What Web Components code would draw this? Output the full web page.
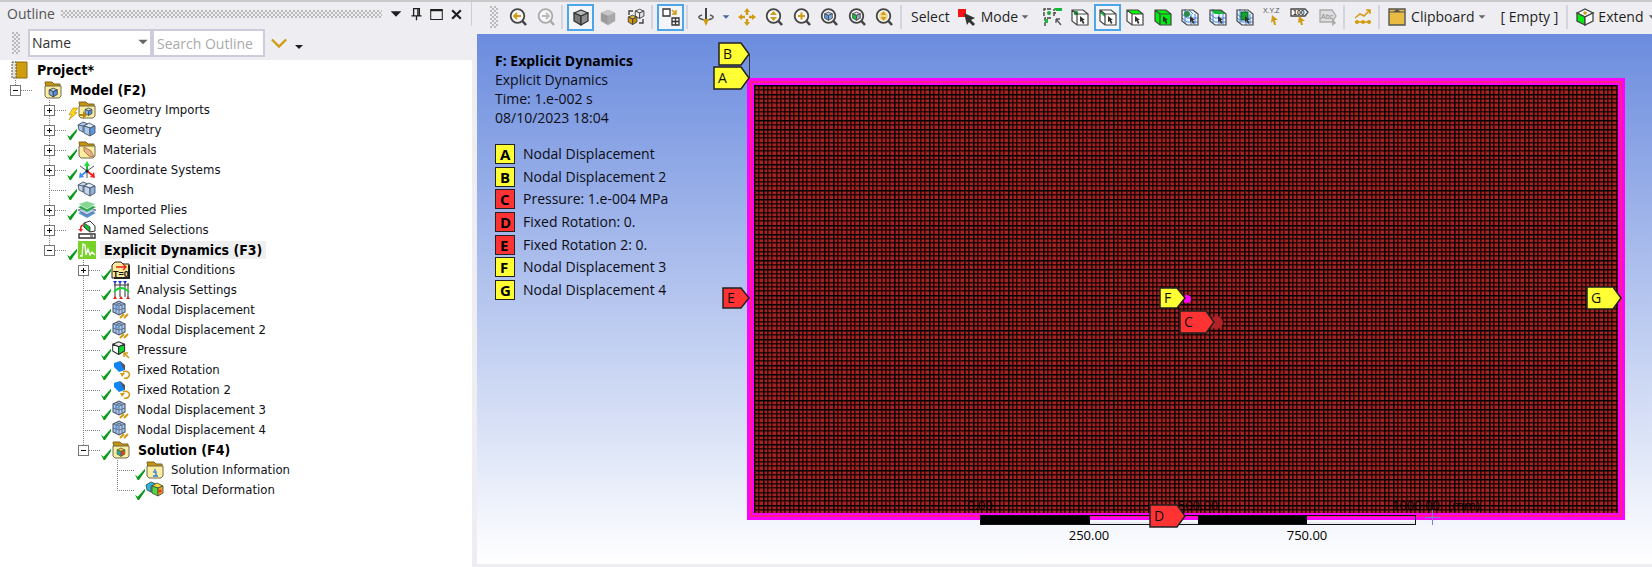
<!DOCTYPE html>
<html lang="en">
<head>
<meta charset="utf-8">
<title>Explicit Dynamics - Mechanical</title>
<style>
  html, body { margin: 0; min-height: 100vh; }
  body { background: #eeeef2; font: 14px/20px "Open Sans", "Noto Sans", sans-serif; color: #1e1e1e; overflow-x: hidden; }
</style>
</head>
<body>
<mech-app></mech-app>
<script>
/* ---------- icon library, every glyph drawn in an 18 x 18 box ---------- */
const G = '#444', Y = '#d19b12';
const lens = (inner, c = G) => `<circle cx="8.500" cy="8" r="6.800" fill="#f7f7f9" stroke="${c}" stroke-width="1.800"/><path d="M13 12.500L17 17" stroke="${c}" stroke-width="2.600"/>${inner}`;
const cube = (top, left, right, stroke = G, w = 1.2) => `<g stroke="${stroke}" stroke-width="${w}" stroke-linejoin="round"><path d="M2 5L9 2L16 5L9 8Z" fill="${top}"/><path d="M2 5L9 8V17L2 13Z" fill="${left}"/><path d="M16 5L9 8V17L16 13Z" fill="${right}"/></g>`;
const smallCube = (x, y, s, t, l, r, k = G, w = 1.5) => `<g transform="translate(${x} ${y}) scale(${s})">${cube(t, l, r, k, w)}</g>`;
const folder = inner => `<path d="M1 1H8L10 3H16V7H2Z" fill="#c8920a" stroke="#7a6424"/><path d="M1 5H17V15L15 17H3L1 15Z" fill="#fbeea0" stroke="#6f6a50"/>${inner}`;
const pick = `<path d="M9 8L14 12L12 12L13.500 15L12 16L10.500 13L9 14Z" fill="#333"/>`;
const box = (inner, fill = '#fff') => `<path d="M1 2H12L17 6V17H6L1 13Z" fill="${fill}"/>${inner}<path d="M1 2H12L17 6V17H6L1 13ZM1 2L6 6H17M6 6V17" fill="none" stroke="#444" stroke-width="1.200"/>`;
const meshed = inner => `<path d="M1 2H12L17 6V17H6L1 13Z" fill="#eef4ff"/><path d="M1 6L6 10H17M1 10L6 14H17M10 6V17M14 6V17M4 1V15M8 2L12 6" stroke="#4a86dc" fill="none"/>${inner}<path d="M1 2H12L17 6V17H6L1 13Z" fill="none" stroke="#444" stroke-width="1.200"/>${pick}`;
const nodal = `<path d="M1 3L7 0L13 3V11L7 14L1 11Z" fill="#a9c9f0" stroke="#4a5568" stroke-width="1.100"/><path d="M1 3L7 5L13 3M7 5V14M1 7L7 9L13 7M4 4V12M10 4V12M4 1.500L10 4M10 1.500L4 4" stroke="#4a5568" stroke-width=".7" fill="none"/><path d="M3 5L6 6V8L3 7Z" fill="#5aa0f0"/><path d="M8 17L12 13M12 17L16 13" stroke="${Y}" stroke-width="2"/>`;
const pair = (a, b) => `<g stroke="#4a5568" stroke-width=".9" stroke-linejoin="round"><path d="M0 4L5 1L10 3V9L5 11L1 9Z" fill="${a}"/><path d="M0 4L5 5V11M5 5L10 3" fill="none"/><path d="M6 5L11 2L17 5L12 7Z" fill="#dbe8f8"/><path d="M6 5L12 7V15L6 12Z" fill="${a}"/><path d="M17 5L12 7V15L17 12Z" fill="${b}"/></g>`;
const rot = `<path d="M2 2L8 0L13 5V9L7 11L2 6Z" fill="#1186f2"/><path d="M8 0L13 4V9L11 7Z" fill="#556"/><path d="M11 11A4 3.500 0 1 1 12 17" fill="none" stroke="${Y}" stroke-width="1.600"/><path d="M8 12H13L10 16Z" fill="${Y}"/>`;
const ICONS = {
  project: `<path d="M4 1H16V17H4Z" fill="#cf9d10" stroke="#8a6a12"/><path d="M1 1H5V17H1Z" fill="#e8e4d4" stroke="#555" stroke-dasharray="2 1"/>`,
  model: folder(smallCube(4, 6, .58, '#b8d4f4', '#7fb0ec', '#4d8ee0')),
  imports: folder(smallCube(6, 6, .5, '#b8d4f4', '#7fb0ec', '#4d8ee0') + `<path d="M1 13H5V10L9 14L5 18V15H1Z" fill="#b9860c"/>`),
  geometry: pair('#a9c8ef', '#5d97e0'),
  materials: folder(`<path d="M6 6L13 10L16 16L11 15L6 10Z" fill="#e6b48a" stroke="#b07a4a"/>`),
  coords: `<path d="M9 10V4" stroke="#12c33a" stroke-width="2"/><path d="M9 0L12 5H6Z" fill="#1ee03a"/><path d="M9 10L4 14" stroke="#3d8ff0" stroke-width="2"/><path d="M1 17L2 11L6 16Z" fill="#3d8ff0"/><path d="M9 10L14 14" stroke="#f02020" stroke-width="2"/><path d="M17 17L12 16L16 11Z" fill="#f02020"/><path d="M9 10L2 5M9 10L16 5M9 10V17" stroke="#555"/><circle cx="9" cy="10" r="1.600" fill="#222"/>`,
  mesh: pair('#c4d6ec', '#8fb2dd'),
  plies: `<path d="M0 12L9 9L18 12L9 17Z" fill="#5d92d6"/><path d="M0 9L9 6L18 9L9 14Z" fill="#b8d4f4" stroke="#456" stroke-width=".7"/><path d="M0 6L9 3L18 6L9 11Z" fill="#2fa64a"/><path d="M0 3L9 0L18 3L9 8Z" fill="#86d694" stroke="#fff" stroke-width=".6"/>`,
  named: `<path d="M6 2L12 0L17 5V10L12 11L6 6Z" fill="#fff" stroke="#333"/><path d="M6 2L12 6V11L6 6Z" fill="#12c33a" stroke="#333" stroke-width=".8"/><path d="M5 4Q2 5 3 9" stroke="#e22" stroke-width="1.600" fill="none"/><path d="M0 8H5L3 11Z" fill="#e22"/><path d="M1 13H17V17H1Z" fill="#fff" stroke="#333" stroke-width="1.400"/><path d="M12 15H15" stroke="#222"/>`,
  dynamics: `<path d="M0 0H18V18H0Z" fill="#78d22a"/><path d="M2 15H4L5 3L7 4L8 14L10 8L12 14L14 11L17 14" fill="none" stroke="#fff" stroke-width="1.300"/>`,
  initial: `<path d="M0 17V4L3 1H9L11 3H17V17Z" fill="#fbe9a0" stroke="#222"/><path d="M17 4V17H2" stroke="#222" stroke-width="2" fill="none"/><path d="M4 6H14M11 3L14 6L11 9" stroke="#e02010" stroke-width="1.300" fill="none"/><text x="1" y="16" font-family="Liberation Sans" font-weight="700" font-size="9" fill="#111">T=0</text>`,
  analysis: `<path d="M3 2V16M8 2V16M13 2V16M16 2V16M2 4H17" stroke="#333"/><path d="M2 11Q9 3 17 11" stroke="#12d030" stroke-width="1.800" fill="none"/><path d="M1 0H5L3 3ZM6 0H10L8 3ZM11 0H15L13 3Z" fill="#2030e0"/><path d="M1 18H5L3 15ZM7 18H11L9 15ZM14 18H18L16 15Z" fill="#e02020"/>`,
  nodal,
  pressure: smallCube(-1, -1, .85, '#eee', '#fff', '#10d838', '#333', 1.2) + `<path d="M17 17L13 13M12 16V12H16" stroke="${Y}" stroke-width="1.600" fill="none"/>`,
  rotation: rot,
  solution: folder(smallCube(4, 6, .55, '#ffd020', '#20c060', '#e04020', '#565') + `<circle cx="7" cy="12" r="1.500" fill="#2a9ae0" opacity=".7"/>`),
  solinfo: folder(`<path d="M9 8V10M7 11H10V15M7 15H12" stroke="#2c7fe0" stroke-width="1.400" fill="none"/>`),
  total: `<g stroke="#454" stroke-width=".9" stroke-linejoin="round"><path d="M0 4L5 1L10 3V9L5 11L1 9Z" fill="#2fb4e8"/><path d="M5 5L10 3V9L5 11Z" fill="#38d070"/><path d="M6 5L11 2L17 5L12 7Z" fill="#ffd830"/><path d="M6 5L12 7V15L6 12Z" fill="#58d838"/><path d="M17 5L12 7V15L17 12Z" fill="#f0a020"/></g><circle cx="14" cy="10" r="1.600" fill="#e83020"/>`,
  bolt: `<path d="M9 0H16L11 7H15L3 18L7 10H3Z" fill="#ffd820" stroke="#b98a00"/>`,
  check: `<path d="M0 10L4 13L15 1V5L6 18H4Z" fill="#0a9a1a"/>`,
  down: `<path d="M3 6H15L9 12Z" fill="currentColor"/>`,
  pin: `<path d="M5 1H13V11H5ZM2 11H16M9 11V17" fill="none" stroke="#1e1e1e" stroke-width="1.800"/><path d="M11 1V11" stroke="#1e1e1e" stroke-width="2"/>`,
  max: `<path d="M1 2H17V16H1Z" fill="none" stroke="#1e1e1e" stroke-width="1.400"/><path d="M1 3H17" stroke="#1e1e1e" stroke-width="3"/>`,
  close: `<path d="M3 3L15 15M15 3L3 15" stroke="#1e1e1e" stroke-width="3"/>`,
  chevron: `<path d="M1 5L9 13L17 5" fill="none" stroke="${Y}" stroke-width="2.600"/>`,
  zback: lens(`<path d="M12 8H6M8 5L5 8L8 11" stroke="${Y}" stroke-width="1.800" fill="none"/>`),
  zfwd: lens(`<path d="M5 8H11M9 5L12 8L9 11" stroke="#bbb" stroke-width="1.800" fill="none"/>`, '#aaa'),
  shaded: cube('#b8b8b8', '#777', '#8e8e8e', '#333', 1.3),
  plain: cube('#c8c8c8', '#9a9a9a', '#a8a8a8', '#aaa', .5),
  swap: smallCube(7, 0, .62, '#eee', '#eee', '#ddd') + smallCube(0, 6, .62, '#eab72a', '#d19b12', '#c08a0a') + `<path d="M2 7V3H6M16 11V15H12" stroke="#444" stroke-width="1.400" fill="none"/>`,
  viewports: `<path d="M1 1H8V8H1Z" fill="#fff" stroke="#333" stroke-width="1.300"/><path d="M10 2L14 6M14 2V6H10" stroke="${Y}" stroke-width="1.500" fill="none"/><path d="M10 10H17V17H10ZM13.500 10V17M10 13.500H17" fill="#fff" stroke="#333" stroke-width="1.300"/>`,
  orbit: `<path d="M5 7Q-1 9 4 11Q9 13 14 11Q19 9 13 7" stroke="#555" stroke-width="1.500" fill="none"/><path d="M9 0V12" stroke="#444" stroke-width="2"/><path d="M6 11H12L9 18Z" fill="${Y}"/>`,
  pan: `<path d="M9 0L12 4H6ZM9 18L12 14H6ZM0 9L4 6V12ZM18 9L14 6V12Z" fill="${Y}"/><path d="M9 4V7M9 11V14M4 9H7M11 9H14" stroke="${Y}" stroke-width="2.400"/>`,
  zoom: lens(`<path d="M8.500 3L12 7H5ZM8.500 13L12 9H5Z" fill="${Y}"/>`),
  zin: lens(`<path d="M5 8H12M8.500 4.500V11.500" stroke="${Y}" stroke-width="2"/>`),
  zfit: lens(smallCube(3.5, 3, .55, '#b8d4f4', '#5d97e0', '#7fb0ec')),
  zsel: lens(smallCube(3.5, 3, .55, '#dde', '#10c838', '#9ab')),
  zprev: lens(`<circle cx="8.500" cy="8" r="4.500" fill="#f2d890"/><path d="M8.500 3L11 7H6ZM8.500 13L11 9H6Z" fill="${Y}"/>`),
  mode: `<path d="M0 1H8V9H0Z" fill="#f21414"/><path d="M6 5L17 10L13 12L17 16L15 18L11 14L9 17Z" fill="#333"/>`,
  filter: `<path d="M0 8V1H7M10 8V1M10 5H12M1 18V10H8" stroke="#444" stroke-width="1.400" fill="none" stroke-dasharray="4 1"/><path d="M10 0H18V3H12ZM1 11H4V15H1Z" fill="#18b838"/><circle cx="5" cy="5" r="2" fill="#18a838"/><path d="M12 11L17 17M12 11V15M12 11H16" stroke="#555" stroke-width="1.300"/>`,
  vertex: box(`<circle cx="5" cy="5" r="2.300" fill="#18a838"/>`) + pick,
  edge: box(`<path d="M1 2L6 6V9L1 5Z" fill="#18b838"/>`) + pick,
  face: box(`<path d="M1 2H12L17 6H6Z" fill="#0f0"/>`) + pick,
  body: box('', '#00ee10') + pick,
  node: meshed(`<circle cx="6" cy="6" r="3" fill="#2a8a48"/>`),
  eface: meshed(`<path d="M1 2H12L16 6H6Z" fill="#18b838"/>`),
  element: meshed(`<path d="M5 4H12V12H5Z" fill="#16a030" stroke="#063"/>`),
  xyz: `<text x="-1" y="5" font-family="Liberation Sans" font-size="7" fill="#555">X.Y.Z</text><path d="M8 7L14 12L11 12L12 17L10 17L9 13L7 15Z" fill="${Y}"/>`,
  probe: `<path d="M0 1H14L17 4L14 8H0Z" fill="#fff" stroke="#444" stroke-width="1.300"/><text x="2" y="7" font-family="Liberation Sans" font-weight="700" font-size="7" fill="#333">100</text><path d="M8 8L14 13L11 13L12 17L10 17L9 14L7 15Z" fill="${Y}"/>`,
  abc: `<path d="M1 2H13L17 8L13 14H1Z" fill="#ddd" stroke="#aaa" stroke-width="1.300"/><text x="2" y="11" font-family="Liberation Sans" font-size="7" fill="#888">Abc</text><path d="M13 10V18L17 15Z" fill="#aaa"/>`,
  chart: `<path d="M1 10L6 6L10 8L16 2M12 2H16V6M1 14H17" stroke="${Y}" stroke-width="1.500" fill="none"/><circle cx="3" cy="14" r="2" fill="${Y}"/><circle cx="9" cy="14" r="2" fill="${Y}"/><circle cx="15" cy="14" r="2" fill="${Y}"/>`,
  clipboard: `<path d="M1 1H17V17H1Z" fill="#e8bb42" stroke="#555" stroke-width="1.400"/><path d="M1 4H17" stroke="#555"/><path d="M5 4L9 1L13 4Z" fill="#555"/>`,
  extend: `<path d="M1 5L9 1L17 5L9 9Z" fill="#fff" stroke="#444" stroke-width="1.300"/><path d="M1 5L9 9V17L1 13Z" fill="#0e1" stroke="#444" stroke-width="1.300"/><path d="M17 5L9 9V17L17 13Z" fill="#fff" stroke="#444" stroke-width="1.300"/><circle cx="9" cy="5" r="1.800" fill="${Y}"/>`
};

class UiIcon extends HTMLElement {
  connectedCallback() {
    if (this.shadowRoot) return;
    this.attachShadow({ mode: 'open' }).innerHTML = `
      <style>:host{display:block;flex:none;width:18px;height:18px} svg{display:block;width:100%;height:100%;overflow:visible}</style>
      <svg viewBox="0 0 18 18" aria-hidden="true">${ICONS[this.getAttribute('name')] || ''}</svg>`;
  }
}
customElements.define('ui-icon', UiIcon);

/* ---------- outline tree ---------- */
class TreeNode extends HTMLElement {
  connectedCallback() {
    if (this.shadowRoot) return;
    const a = n => this.getAttribute(n);
    const exp = a('expander');
    this.setAttribute('role', 'treeitem');
    this.attachShadow({ mode: 'open' }).innerHTML = `
      <style>
        :host{display:block;
          background:repeating-linear-gradient(#808080 0 1px,transparent 1px 2px) 15px 0/1px 100% no-repeat}
        :host(:last-child){background-size:1px 10px}
        :host([root]){background:none}
        .row{display:flex;align-items:center;height:20px;white-space:nowrap}
        .branch{flex:none;width:33px;height:20px;display:flex;align-items:center;box-sizing:border-box;padding-left:10px;
          background:repeating-linear-gradient(90deg,#808080 0 1px,transparent 1px 2px) 15px 10px/18px 1px no-repeat}
        :host([root]) .branch{display:none}
        .exp{width:11px;height:11px;padding:0;border:1px solid #777;background:
          linear-gradient(#111,#111) 2px 4px/5px 1px no-repeat,#fff}
        .exp.plus{background:linear-gradient(#111,#111) 2px 4px/5px 1px no-repeat,
          linear-gradient(#111,#111) 4px 2px/1px 5px no-repeat,#fff}
        .state{flex:none;width:11px;display:flex;align-items:end;height:20px}
        .state ui-icon{width:12px;height:12px}
        .label{margin-left:4px;padding:0 3px;line-height:18px;color:#101018}
        .label.bold{font-weight:700;font-size:14px;color:#000;padding:0 4px}
        .label.selected{background:#efefef}
        .kids{margin-left:34px}
        :host([root]) .kids{margin-left:0}
      </style>
      <div class="row">
        <span class="branch">${exp ? `<button class="exp ${exp}" aria-label="${exp === 'plus' ? 'Expand' : 'Collapse'}"></button>` : ''}</span>
        <span class="state">${a('state') ? `<ui-icon name="${a('state')}"></ui-icon>` : ''}</span>
        <ui-icon name="${a('icon')}"></ui-icon>
        <span class="label ${a('look') || ''}">${a('label')}</span>
      </div>
      <div class="kids" role="group"><slot></slot></div>`;
  }
}
customElements.define('tree-node', TreeNode);

class OutlinePanel extends HTMLElement {
  connectedCallback() {
    if (this.shadowRoot) return;
    const n = (label, icon, o = '', kids = '') => `<tree-node label="${label}" icon="${icon}" ${o}>${kids}</tree-node>`;
    const ok = 'state="check"', plus = 'expander="plus"', minus = 'expander="minus"';
    this.attachShadow({ mode: 'open' }).innerHTML = `
      <style>
        :host{display:flex;flex-direction:column;background:#eeeef2}
        header{display:flex;align-items:center;height:26px;border-top:2px solid #c9c9c9;box-sizing:border-box;
          padding:0 5px 0 7px;border-right:1px solid #ccccd8;color:#555}
        h2{margin:0;font-size:14px;font-weight:400;line-height:20px}
        .dots{flex:1;height:8px;margin:0 4px 0 6px;background:
          radial-gradient(circle at 1px 1px,#bbb 1px,transparent 1px) 0 0/4px 4px,
          radial-gradient(circle at 1px 1px,#bbb 1px,transparent 1px) 2px 2px/4px 4px}
        button{border:0;padding:0;background:none;color:#1e1e1e;display:grid;place-items:center;width:20px;height:20px}
        header ui-icon{width:13px;height:13px}
        header button.tri ui-icon{width:16px;height:16px}
        form{display:flex;align-items:center;height:34px;padding-left:12px;margin:0}
        .grip{width:8px;height:22px;margin-right:8px;background:
          radial-gradient(circle at 1px 1px,#bbb 1px,transparent 1px) 0 0/4px 4px,
          radial-gradient(circle at 1px 1px,#bbb 1px,transparent 1px) 2px 2px/4px 4px}
        .pick{position:relative;display:block}
        .pick ui-icon{position:absolute;right:2px;top:6px;width:14px;height:14px;color:#666;pointer-events:none}
        select,input{box-sizing:border-box;height:28px;border:2px solid #ccccdc;background:#fff;border-radius:0;
          font:inherit;padding:0 2px;appearance:none;margin:0;display:block;color:#333}
        select{width:124px} input{width:113px;padding:0 3px} input::placeholder{color:#aaa;opacity:1}
        form button{margin-left:4px}
        form button ui-icon{width:16px;height:16px}
        form .more{margin-left:0;align-items:end} .more ui-icon{width:12px;height:12px}
        .tree{flex:1;background:#fff;font:13px/18px "DejaVu Sans Condensed","Open Sans",sans-serif}
      </style>
      <header><h2>Outline</h2><span class="dots"></span>
        <button class="tri" aria-label="Options"><ui-icon name="down"></ui-icon></button>
        <button aria-label="Pin"><ui-icon name="pin"></ui-icon></button>
        <button aria-label="Maximise"><ui-icon name="max"></ui-icon></button>
        <button aria-label="Close"><ui-icon name="close"></ui-icon></button>
      </header>
      <form onsubmit="return false"><span class="grip"></span>
        <label class="pick"><select aria-label="Filter by"><option>Name</option></select><ui-icon name="down"></ui-icon></label>
        <input type="text" aria-label="Search Outline" placeholder="Search Outline">
        <button type="button" aria-label="Next"><ui-icon name="chevron"></ui-icon></button>
        <button type="button" class="more" aria-label="More"><ui-icon name="down"></ui-icon></button>
      </form>
      <div class="tree" role="tree">${
        n('Project*', 'project', 'root look="bold"',
          n('Model (F2)', 'model', `${minus} look="bold"`,
            n('Geometry Imports', 'imports', `${plus} state="bolt"`) +
            n('Geometry', 'geometry', `${plus} ${ok}`) +
            n('Materials', 'materials', `${plus} ${ok}`) +
            n('Coordinate Systems', 'coords', `${plus} ${ok}`) +
            n('Mesh', 'mesh', ok) +
            n('Imported Plies', 'plies', `${plus} ${ok}`) +
            n('Named Selections', 'named', plus) +
            n('Explicit Dynamics (F3)', 'dynamics', `${minus} ${ok} look="bold selected"`,
              n('Initial Conditions', 'initial', `${plus} ${ok}`) +
              n('Analysis Settings', 'analysis', ok) +
              n('Nodal Displacement', 'nodal', ok) +
              n('Nodal Displacement 2', 'nodal', ok) +
              n('Pressure', 'pressure', ok) +
              n('Fixed Rotation', 'rotation', ok) +
              n('Fixed Rotation 2', 'rotation', ok) +
              n('Nodal Displacement 3', 'nodal', ok) +
              n('Nodal Displacement 4', 'nodal', ok) +
              n('Solution (F4)', 'solution', `${minus} ${ok} look="bold"`,
                n('Solution Information', 'solinfo', ok) +
                n('Total Deformation', 'total', ok)))))
      }</div>`;
  }
}
customElements.define('outline-panel', OutlinePanel);

/* ---------- graphics toolbar ---------- */
class GraphicsToolbar extends HTMLElement {
  connectedCallback() {
    if (this.shadowRoot) return;
    const b = (name, label, on) => `<button class="tool${on ? ' on' : ''}" aria-label="${label}"><ui-icon name="${name}"></ui-icon></button>`;
    const sep = '<span class="sep"></span>';
    this.attachShadow({ mode: 'open' }).innerHTML = `
      <style>
        :host{display:flex;align-items:center;height:34px;box-sizing:border-box;border-top:2px solid #c9c9c9;
          background:#eeeef2;padding:0 0 2px 18px;overflow:hidden;white-space:nowrap}
        button{flex:none;border:0;padding:0;background:none;font:inherit;color:#1e1e1e;display:flex;align-items:center}
        .tool{width:27px;height:27px;justify-content:center;box-sizing:border-box}
        .tool.on{border:2px solid #4ea6ea;background:#f3f5f9}
        .grip{flex:none;width:8px;height:22px;margin-right:6px;background:
          radial-gradient(circle at 1px 1px,#bbb 1px,transparent 1px) 0 0/4px 4px,
          radial-gradient(circle at 1px 1px,#bbb 1px,transparent 1px) 2px 2px/4px 4px}
        .group{display:flex;flex:none;justify-content:space-between}
        .two{width:55px} .three{width:82px} .six{width:165px} .eleven{width:302px}
        .sep{flex:none;width:2px;height:24px;margin:0 4px 0 2px;background:#d4d4de}
        .drop{width:14px;justify-content:center}
        .drop ui-icon,.tri{width:10px;height:10px;color:#666}
        .drop ui-icon{color:#47699a}
        .text{margin-left:5px}
        .mode{margin:0 9px 0 8px} .mode ui-icon:first-child,.clip ui-icon:first-child{margin-right:5px}
        .tri{margin-left:2px}
        .clip{margin-left:4px} .empty{margin:0 6px 0 14px}
        .extend{margin-left:4px;gap:4px} .extend .tri{margin-left:0}
      </style>
      <span class="grip"></span>
      <span class="group two">${b('zback', 'Previous view')}${b('zfwd', 'Next view')}</span>${sep}
      <span class="group three">${b('shaded', 'Shaded exterior and edges', 1)}${b('plain', 'Shaded exterior')}${b('swap', 'Wireframe')}</span>${sep}
      ${b('viewports', 'Manage views', 1)}${sep}
      ${b('orbit', 'Rotate')}<button class="drop" aria-label="Rotate options"><ui-icon name="down"></ui-icon></button>
      <span class="group six">${b('pan', 'Pan')}${b('zoom', 'Zoom')}${b('zin', 'Box zoom')}${b('zfit', 'Zoom to fit')}${b('zsel', 'Zoom to selection')}${b('zprev', 'Magnifier')}</span>${sep}
      <span class="text">Select</span>
      <button class="mode"><ui-icon name="mode"></ui-icon>Mode<ui-icon class="tri" name="down"></ui-icon></button>
      <span class="group eleven">${b('filter', 'Smart select')}${b('vertex', 'Vertex')}${b('edge', 'Edge', 1)}${b('face', 'Face')}${b('body', 'Body')}${b('node', 'Node')}${b('eface', 'Element face')}${b('element', 'Element')}${b('xyz', 'Coordinates')}${b('probe', 'Probe')}${b('abc', 'Label')}</span>${sep}
      ${b('chart', 'Chart')}${sep}
      <button class="clip"><ui-icon name="clipboard"></ui-icon>Clipboard<ui-icon class="tri" name="down"></ui-icon></button>
      <button class="empty">[ Empty ]</button>${sep}
      <button class="extend"><ui-icon name="extend"></ui-icon>Extend<ui-icon class="tri" name="down"></ui-icon></button>`;
  }
}
customElements.define('graphics-toolbar', GraphicsToolbar);

/* ---------- annotation flag; its tip sits on the host's left/top point ---------- */
class PointFlag extends HTMLElement {
  connectedCallback() {
    if (this.shadowRoot) return;
    const w = +this.getAttribute('width'), h = w < 30 ? 22 : 24, t = this.getAttribute('tag');
    const c = 'CDE'.includes(t) ? '#ff3333' : '#ffff33';
    this.attachShadow({ mode: 'open' }).innerHTML = `
      <style>:host{position:absolute;display:block;width:${w}px;height:${h}px;transform:translate(-100%,-50%)} svg{display:block}
        text{font:14px "Open Sans",sans-serif;fill:#111}</style>
      <svg width="${w}" height="${h}"><path d="M1 1H${w - 9}L${w - 1} ${h / 2}L${w - 9} ${h - 1}H1Z" fill="${c}" stroke="#222" stroke-width="1.500"/>
      <text x="5" y="${h / 2 + 5}">${t}</text></svg>`;
  }
}
customElements.define('point-flag', PointFlag);

class ScaleRuler extends HTMLElement {
  connectedCallback() {
    if (this.shadowRoot) return;
    this.attachShadow({ mode: 'open' }).innerHTML = `
      <style>
        :host{display:block;font-size:13px;line-height:18px;color:#000}
        .bar{display:grid;grid-template-columns:repeat(4,1fr);height:10px;box-sizing:border-box;border:1px solid #111}
        .bar i:nth-child(odd){background:#000}
        .bar i:nth-child(even){border-bottom:2px solid #e6eaf0;align-self:end}
        span{position:absolute;transform:translateX(-50%);white-space:nowrap}
        .up{bottom:11px} .down{top:11px}
        .q1{left:25%} .q2{left:50%} .q3{left:75%} .q0{left:0} .q4{left:100%}
        .unit{left:calc(100% + 48px)}
      </style>
      <div class="bar"><i></i><i></i><i></i><i></i></div>
      <span class="up q0">0.00</span><span class="up q2">500.00</span><span class="up q4">1000.00</span><span class="up unit">(mm)</span>
      <span class="down q1">250.00</span><span class="down q3">750.00</span>`;
  }
}
customElements.define('scale-ruler', ScaleRuler);

class MeshModel extends HTMLElement {
  connectedCallback() {
    if (this.shadowRoot) return;
    const at = [0, 4, 9, 13, 17, 22, 26, 30];
    const lines = at.map(p => {
      const strong = p === 0 || p === 9;
      return `<path d="M${p} 0h1v35h-1zM0 ${p}h35v1H0z" fill="#000" opacity="${strong ? 1 : .72}"/>
              <path d="M${p + 1} 0h1v35h-1zM0 ${p + 1}h35v1H0z" fill="#000" opacity="${strong ? .5 : .4}"/>`;
    }).join('');
    this.attachShadow({ mode: 'open' }).innerHTML = `
      <style>
        :host{display:block;position:relative}
        .plate{position:absolute;inset:0;box-sizing:border-box;border:3px solid #f0f;background:#ff2080;padding:2px}
        .inner{height:100%;box-sizing:border-box;border:2px solid #f0f;background:#a82222}
        svg.mesh{display:block;width:100%;height:100%}
        .stem{position:absolute;left:2px;top:-24px;width:1px;height:24px;background:#333}
        .dot{position:absolute;left:calc(50% - 3px);top:calc(50% - 4px);width:8px;height:8px;border-radius:4px;background:#f0f}
        .head{position:absolute;left:calc(50% + 24px);top:calc(50% + 17px);width:13px;height:13px;border-radius:7px;background:#b02226}
        .cross{position:absolute;left:678px;bottom:-5px;width:15px;height:15px;background:
          linear-gradient(#7a78e8,#7a78e8) 7px 0/1px 15px no-repeat,linear-gradient(#7a78e8,#7a78e8) 0 7px/15px 1px no-repeat}
        scale-ruler{position:absolute;left:233px;width:436px;bottom:-5px}
        .a{left:3px;top:0} .b{left:3px;top:-24px} .e{left:3px;top:calc(50% - 1px)}
        .f{left:50%;top:calc(50% - 1px)} .c{left:calc(50% + 29px);top:calc(50% + 23px)}
        .d{left:50%;top:calc(100% - 4px)} .g{left:calc(100% - 3px);top:calc(50% - 1px)}
      </style>
      <div class="plate"><div class="inner"><svg class="mesh" aria-hidden="true">
        <defs><pattern id="cells" width="35" height="35" patternUnits="userSpaceOnUse">${lines}</pattern></defs>
        <rect width="100%" height="100%" fill="url(#cells)"/></svg></div></div>
      <span class="stem"></span><span class="dot"></span><span class="head"></span>
      <scale-ruler></scale-ruler><span class="cross"></span>
      <point-flag class="b" tag="B" width="32"></point-flag>
      <point-flag class="a" tag="A" width="37"></point-flag>
      <point-flag class="e" tag="E" width="28"></point-flag>
      <point-flag class="f" tag="F" width="27"></point-flag>
      <point-flag class="c" tag="C" width="36"></point-flag>
      <point-flag class="d" tag="D" width="37"></point-flag>
      <point-flag class="g" tag="G" width="36"></point-flag>`;
  }
}
customElements.define('mesh-model', MeshModel);

class GraphicsView extends HTMLElement {
  connectedCallback() {
    if (this.shadowRoot) return;
    const items = [['A', 'Nodal Displacement'], ['B', 'Nodal Displacement 2'], ['C', 'Pressure: 1.e-004 MPa'], ['D', 'Fixed Rotation: 0.'],
      ['E', 'Fixed Rotation 2: 0.'], ['F', 'Nodal Displacement 3'], ['G', 'Nodal Displacement 4']];
    this.attachShadow({ mode: 'open' }).innerHTML = `
      <style>
        :host{display:grid;grid-template-columns:270px 1fr;padding-right:27px;background:linear-gradient(#6b8cde,#fff);color:#0c0c14}
        .info{padding:17px 0 0 18px;line-height:19px;white-space:nowrap}
        h1{font-size:14px;line-height:19px;font-weight:700;margin:0;color:#000} p{margin:0}
        ul{list-style:none;margin:17px 0 0;padding:0;height:156px;display:flex;flex-direction:column;justify-content:space-between}
        li{display:flex;gap:8px;align-items:center;line-height:20px}
        b{width:20px;height:20px;box-sizing:border-box;border:1px solid #222;line-height:18px;padding-left:4px;font-size:15px;color:#000}
        .y{background:#ffff33} .r{background:#ff3333}
        mesh-model{margin:44px 0}
      </style>
      <section class="info"><h1>F: Explicit Dynamics</h1><p>Explicit Dynamics</p><p>Time: 1.e-002 s</p><p>08/10/2023 18:04</p>
        <ul>${items.map(([k, t]) => `<li><b class="${'CDE'.includes(k) ? 'r' : 'y'}">${k}</b><span>${t}</span></li>`).join('')}</ul></section>
      <mesh-model></mesh-model>`;
  }
}
customElements.define('graphics-view', GraphicsView);

class MechApp extends HTMLElement {
  connectedCallback() {
    if (this.shadowRoot) return;
    this.attachShadow({ mode: 'open' }).innerHTML = `
      <style>
        :host{display:grid;grid-template-columns:minmax(300px,472px) minmax(0,1fr);min-height:100vh}
        main{display:flex;flex-direction:column;min-width:0}
        graphics-view{flex:1;margin:0 0 3px 5px}
      </style>
      <outline-panel></outline-panel>
      <main><graphics-toolbar></graphics-toolbar><graphics-view></graphics-view></main>`;
  }
}
customElements.define('mech-app', MechApp);
</script>
</body>
</html>
